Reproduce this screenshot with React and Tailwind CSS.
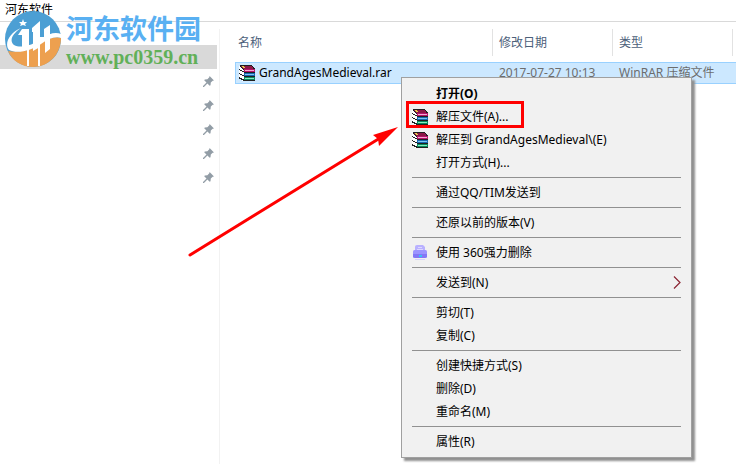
import clsx from "clsx";

const menuGroups = [
  [
    { label: "打开(O)", bold: true },
    { label: "解压文件(A)...", icon: "rar", marked: true },
    { label: "解压到 GrandAgesMedieval\\(E)", icon: "rar" },
    { label: "打开方式(H)..." },
  ],
  [{ label: "通过QQ/TIM发送到" }],
  [{ label: "还原以前的版本(V)" }],
  [{ label: "使用 360强力删除", icon: "shredder" }],
  [{ label: "发送到(N)", submenu: true }],
  [{ label: "剪切(T)" }, { label: "复制(C)" }],
  [{ label: "创建快捷方式(S)" }, { label: "删除(D)" }, { label: "重命名(M)" }],
  [{ label: "属性(R)" }],
];

const pins = [1, 2, 3, 4, 5];

export default function App() {
  return (
    <div className="relative flex min-h-screen flex-col overflow-hidden bg-white font-['Noto_Sans','Noto_Sans_CJK_SC',sans-serif] text-xs text-black">
      <header className="h-[22px] border-b border-[#d9d9d9] pl-[5px] leading-5">河东软件</header>
      <div className="flex flex-1 pt-[7px]">
        <Sidebar />
        <main className="min-w-0 flex-1 pl-[15px]">
          <FileList />
        </main>
      </div>
      <Watermark />
      <ContextMenu />
      <Arrow />
    </div>
  );
}

function Sidebar() {
  return (
    <aside className="w-[220px] shrink-0 border-r border-[#f2f2f2] pt-4 pr-0.5">
      <div className="h-6 bg-[#d9d9d9]" />
      <ul>
        {pins.map((pin) => (
          <li key={pin} className="flex h-6 items-center justify-end pr-[3px]">
            <PinIcon />
          </li>
        ))}
      </ul>
    </aside>
  );
}

function FileList() {
  return (
    <table className="w-full table-fixed border-separate border-spacing-0 text-left">
      <thead>
        <tr className="h-[27px] text-[#4c607a]">
          <th className="w-[258px] border-r border-[#e2e2e2] p-0 pl-[3px] font-normal">名称</th>
          <th className="w-[120px] border-r border-[#e2e2e2] p-0 pl-1.5 font-normal">修改日期</th>
          <th className="w-[120px] border-r border-[#e2e2e2] p-0 pl-1.5 font-normal">类型</th>
          <th className="p-0" />
        </tr>
      </thead>
      <tbody>
        <tr className="h-1.5">
          <td colSpan={4} className="p-0" />
        </tr>
        <tr className="h-[22px] bg-[#cce8ff] leading-5 text-[#6d6d6d]">
          <td className="border-y border-l border-[#99d1ff] p-0 pl-[3px] text-black">
            <div className="flex items-center gap-1">
              <RarIcon />
              <span>GrandAgesMedieval.rar</span>
            </div>
          </td>
          <td className="border-y border-[#99d1ff] p-0 pl-1.5">2017-07-27 10:13</td>
          <td className="border-y border-[#99d1ff] p-0 pl-1.5 whitespace-nowrap">WinRAR 压缩文件</td>
          <td className="border-y border-[#99d1ff] p-0" />
        </tr>
      </tbody>
    </table>
  );
}

function ContextMenu() {
  return (
    <div
      role="menu"
      className="absolute top-[77px] left-[401px] w-[291px] border border-[#a0a0a0] bg-[#f1f1f1] py-1 shadow-[3px_3px_2px_#909090]"
    >
      {menuGroups.map((group, i) => (
        <div key={i}>
          {i > 0 && <hr className="mx-2.5 my-[3px] border-[#919191]" />}
          {group.map((item) => (
            <MenuItem key={item.label} {...item} />
          ))}
        </div>
      ))}
    </div>
  );
}

function MenuItem({ label, bold, icon, marked, submenu }) {
  return (
    <button
      role="menuitem"
      className={clsx("relative flex h-[23px] w-full items-center pr-2.5 pl-2.5 text-left", bold && "font-bold")}
    >
      <span className="flex w-6 shrink-0">
        {icon === "rar" && <RarIcon />}
        {icon === "shredder" && <ShredderIcon />}
      </span>
      <span className="flex-1 whitespace-nowrap">{label}</span>
      {submenu && <ChevronIcon />}
      {marked && <span className="absolute -top-1 left-1 h-[27px] w-[118px] border-3 border-[#f00]" />}
    </button>
  );
}

function ChevronIcon() {
  return (
    <svg width="8" height="13" viewBox="0 0 8 13" fill="none" stroke="#8b2432" strokeWidth="1.2">
      <path d="M1 .5 7 6.5 1 12.5" />
    </svg>
  );
}

function PinIcon() {
  return (
    <svg width="11" height="11" viewBox="0 0 11 11" fill="#929da6">
      <path d="M6.6 0 11 4.4 9.7 4.7 7.8 6.6 7.5 9.2 6.7 9.7 4.4 7.4 1 10.9 0 11 0 10.1 3.5 6.5 1.2 4.2 1.8 3.5 4.4 3.2 6.3 1.3Z" />
    </svg>
  );
}

// Three stacked books
function RarIcon() {
  return (
    <svg width="16" height="16" viewBox="0 0 16 16" shapeRendering="crispEdges" className="shrink-0">
      <path fill="#fff" d="M0 1H4V4H5V16H4L0 13Z" />
      <path fill="#202020" d="M1 0H12L16 4V5H5L0 1ZM5 7H16V8H5ZM5 11H16V12H5ZM5 15H16V16H5Z" />
      <path fill="#202020" d="M0 4H1V5H3V6H5V7H3V6H1V5H0ZM0 8H1V9H3V10H5V11H3V10H1V9H0ZM0 12H1V13H3V14H5V16H4V15H2V14H0Z" />
      <path fill="#8c1747" d="M2 1H12L14 3V4H5L2 2Z" />
      <path fill="#e8d24a" d="M3 1H5V2H6V3H4V2H3Z" />
      <path fill="#b5146a" d="M5 4H16V7H5Z" />
      <path fill="#f5a9d2" d="M6 5H15V6H6Z" />
      <path fill="#1668b0" d="M5 8H16V11H5Z" />
      <path fill="#7cc6f2" d="M6 9H15V10H6Z" />
      <path fill="#078a5c" d="M5 12H16V15H5Z" />
      <path fill="#8aebc1" d="M6 13H15V14H6Z" />
    </svg>
  );
}

function ShredderIcon() {
  return (
    <svg width="16" height="16" viewBox="0 0 16 16">
      <path fill="#b9b1ff" d="M3 1.5Q3 0 5 0H11L13 2V8H3Z" />
      <path fill="#ddd8ff" d="M6 2H10V3H6ZM5 4H11V5H5Z" />
      <rect x="1" y="5" width="14" height="8" rx="1.5" fill="#9c94ff" />
      <path fill="#8478f6" d="M1 9H15V12L13 13H3L1 12Z" />
      <path fill="#37c4f5" d="M7 10H10V12H7Z" />
      <path fill="#d5d0ff" d="M3 14H13V15H3Z" />
    </svg>
  );
}

function Watermark() {
  return (
    <div className="absolute top-[11px] left-[5px] flex gap-1">
      <svg width="57" height="56" viewBox="0 0 57 56">
        <circle cx="28" cy="28" r="28" fill="#4c9fd4" />
        <path fill="#eda04f" d="M3 40C15 42 27 39 35 33C43 27 50 25 56 27C56 43 44 56 28 56C17 56 7 50 3 40Z" />
        {/* orbit */}
        <path
          fill="#fff"
          d="M16 17C7 23 4 30 9 34C16 38 28 34 36 28C44 22 51 21 56 23V27C50 25 43 28 36 33C26 40 12 43 4 39C-1 33 4 22 16 17Z"
        />
        {/* towers */}
        <path fill="#fff" d="M13 24 17 18H24V38H17V24Z" />
        <path fill="#fff" d="M27 17 35 10V36L28 40V21H27Z" />
        <path fill="#fff" d="M35 26H39V18L45 14V38L40 42V29H35Z" />
        <path fill="#fff" d="M22 38H24V55H22ZM33 34H35V55H33Z" />
        <path fill="#fff" d="m18 8 1 3 3 0-2 2 1 2-3-1-3 1 1-2-2-2 3 0Z" />
      </svg>
      <div className="whitespace-nowrap">
        <p className="font-['Noto_Sans_CJK_SC',sans-serif] text-[27px] leading-[34px] font-bold text-[#59b0f2]">
          河东软件园
        </p>
        <p className="font-['Liberation_Serif',serif] text-xl leading-6 font-bold text-[#61b058]">www.pc0359.cn</p>
      </div>
    </div>
  );
}

function Arrow() {
  return (
    <svg className="absolute top-[126px] left-[188px]" width="212" height="132" viewBox="0 0 212 132">
      <path d="M2 129 192 12" stroke="#f00" strokeWidth="3" strokeLinecap="round" />
      <path fill="#f00" d="M210 1 185 9 190 13 191 20Z" />
    </svg>
  );
}
